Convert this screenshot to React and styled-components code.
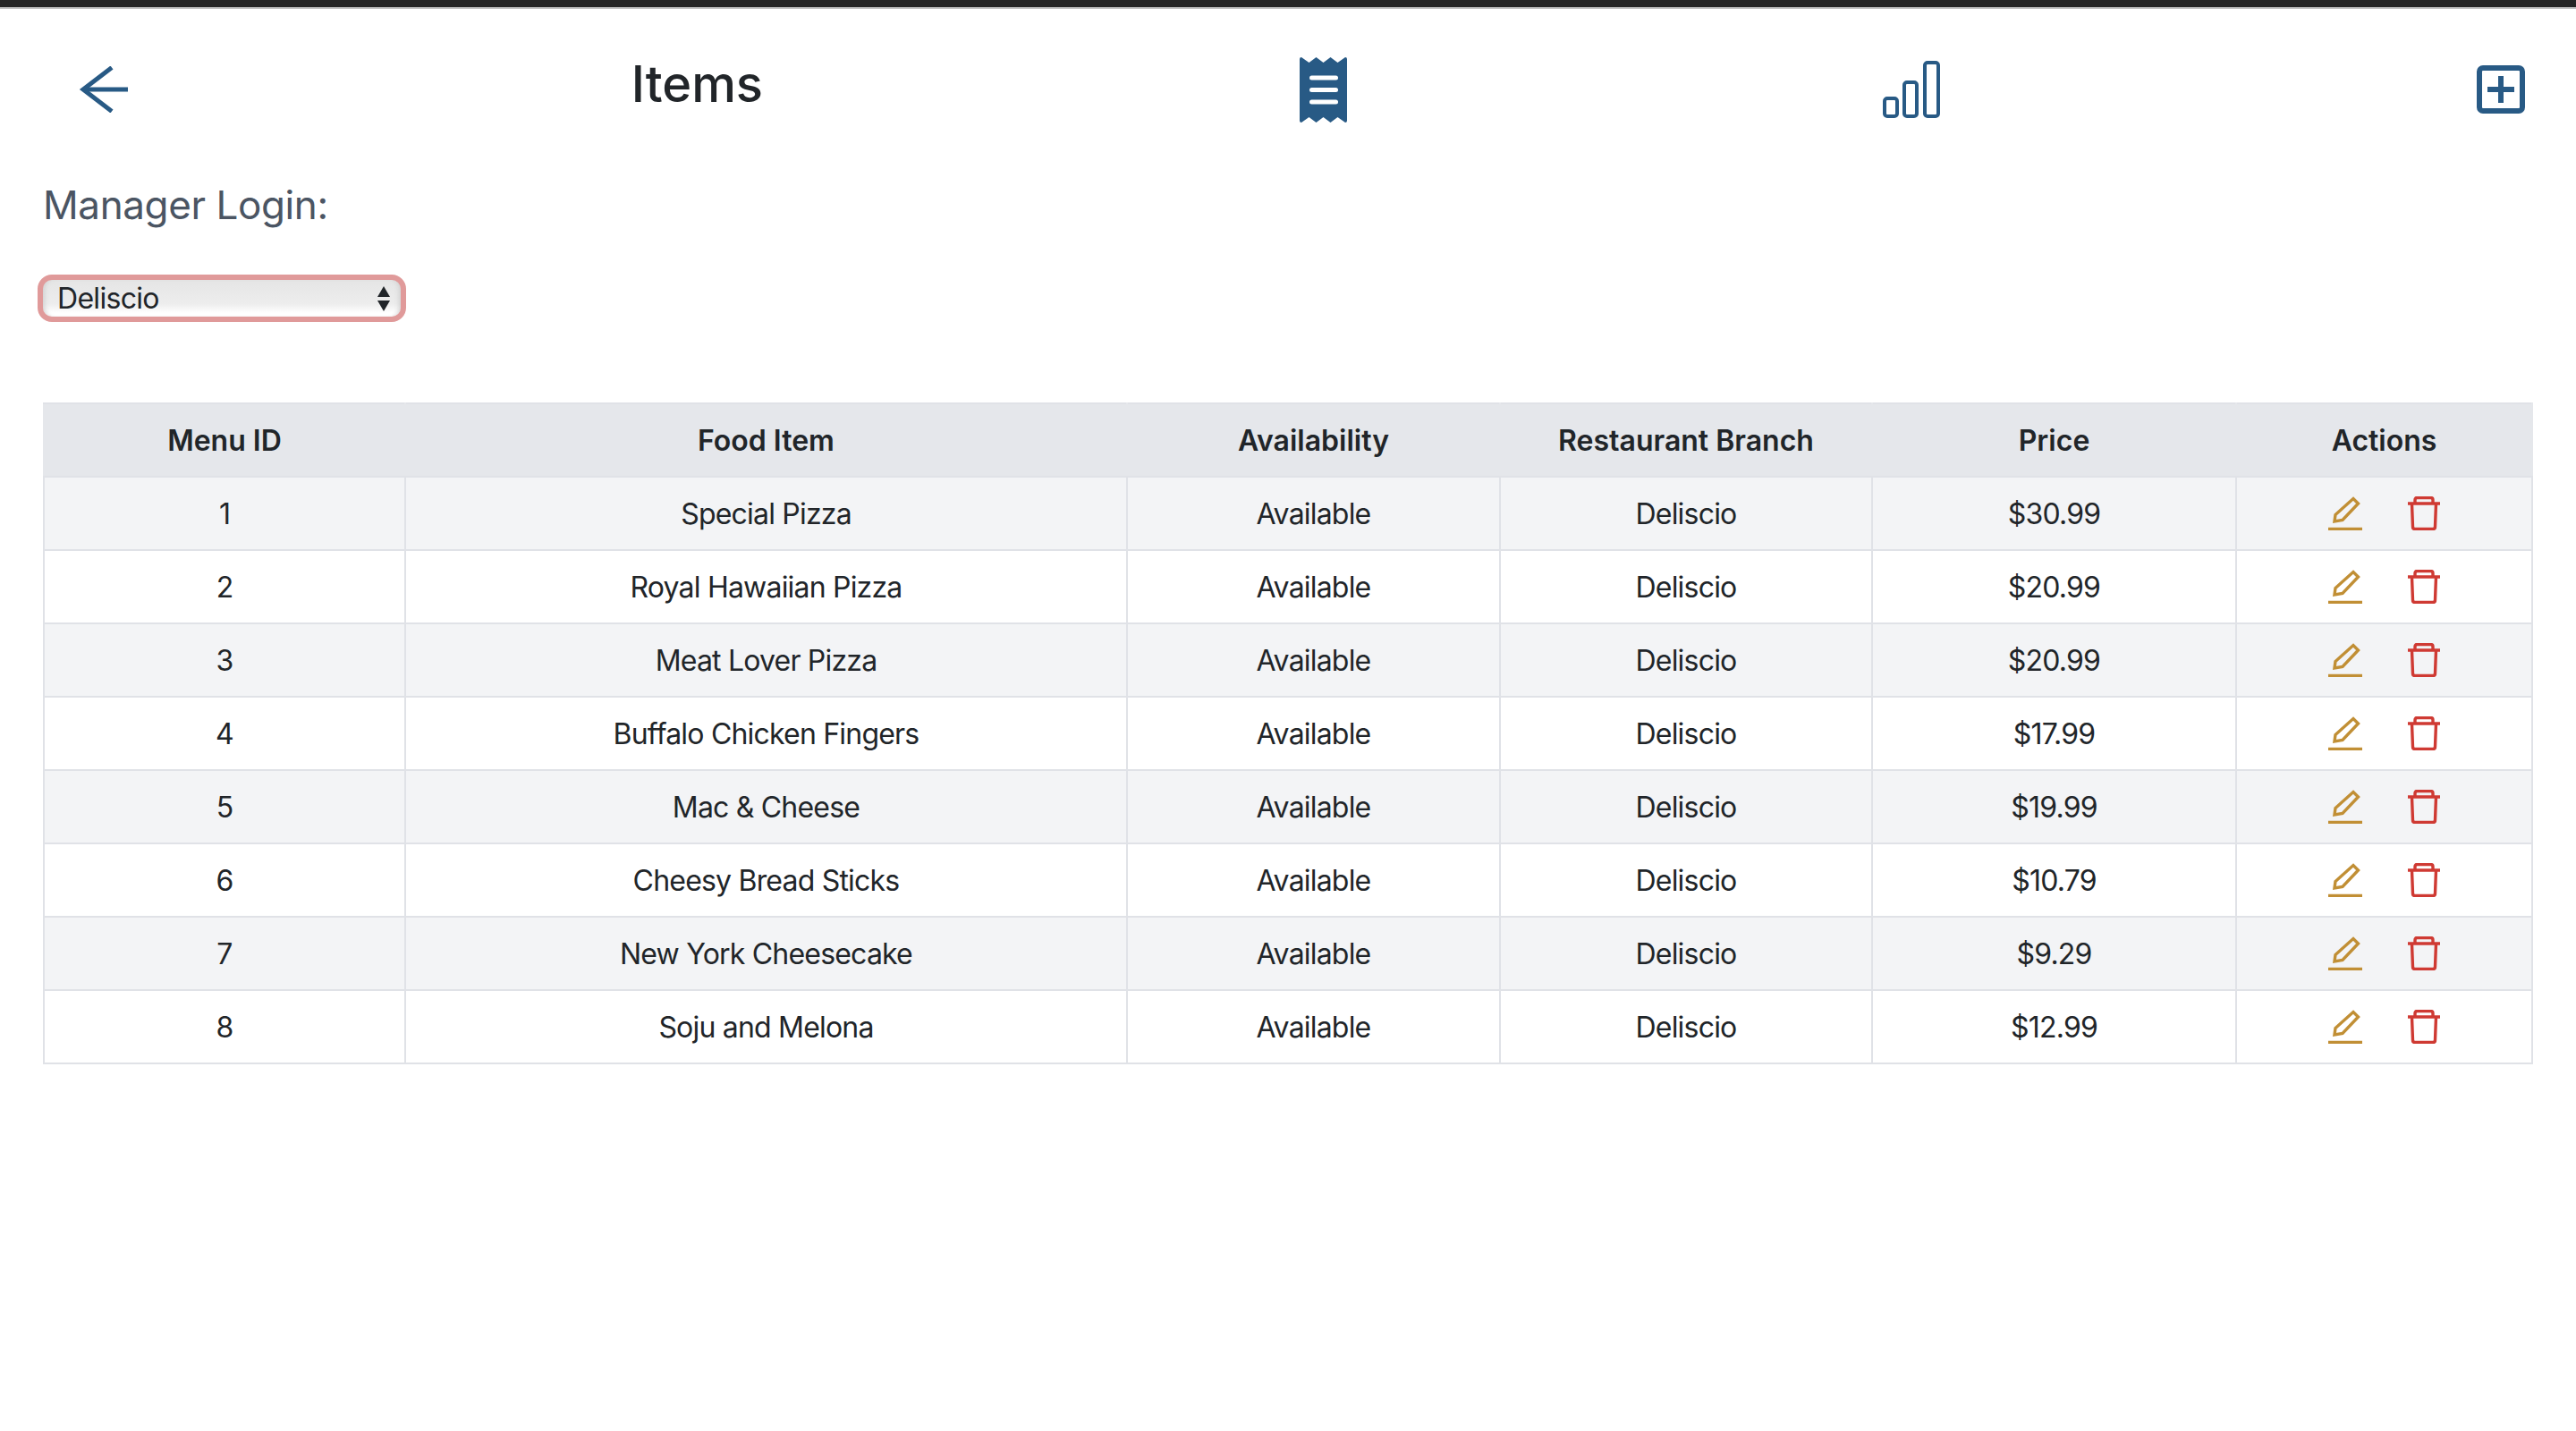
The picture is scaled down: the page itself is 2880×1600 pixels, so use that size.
import styled, { createGlobalStyle } from 'styled-components';

const GlobalStyle = createGlobalStyle`
  * {
    box-sizing: border-box;
  }

  body {
    margin: 0;
    background: #fff;
    color: #212529;
    font-family: Inter, "Noto Sans", sans-serif;
  }
`;

const Page = styled.div`
  min-height: 1600px;
  background: #fff;
`;

const TopBar = styled.div`
  height: 10px;
  background: #252525;
  border-bottom: 2px solid #c4c4c4;
`;

const Header = styled.header`
  display: flex;
  align-items: center;
  justify-content: space-between;
  height: 180px;
  padding: 0 57px 0 88px;
`;

const IconButton = styled.button`
  display: flex;
  padding: 0;
  border: none;
  background: none;
  color: #285a85;
  cursor: pointer;
`;

const Title = styled.h1`
  margin: 0 0 12px -38px;
  font-size: 56px;
  line-height: 68px;
  font-weight: 500;
  color: #212529;
`;

const Content = styled.main`
  padding: 0 48px;
`;

const Label = styled.h2`
  margin: 12px 0 0;
  font-size: 44px;
  line-height: 54px;
  font-weight: 400;
  letter-spacing: -0.4px;
  color: #4b5563;
`;

const SelectWrap = styled.div`
  position: relative;
  width: 412px;
  height: 53px;
  margin: 51px 0 0 -6px;
`;

const Select = styled.select`
  display: block;
  width: 100%;
  height: 100%;
  padding: 0 0 0 16px;
  border: 6px solid #e09a9a;
  border-radius: 16px;
  background: linear-gradient(#e5e5e5, #ededed 65%, #fff 90%);
  box-shadow: inset 6px 0 6px -5px #c9c9c9, inset -6px 0 6px -5px #c9c9c9;
  appearance: none;
  outline: none;
  font-family: inherit;
  font-size: 32px;
  letter-spacing: -0.7px;
  color: #212529;
`;

const SelectArrows = styled.svg`
  position: absolute;
  top: 13px;
  right: 18px;
  pointer-events: none;
`;

const Table = styled.table`
  width: 2782px;
  margin-top: 90px;
  border-collapse: collapse;
  table-layout: fixed;
  font-size: 32px;
  text-align: center;
`;

const HeadCell = styled.th`
  height: 82px;
  padding: 0;
  border: 2px solid #e0e2e7;
  border-left-color: #e5e7eb;
  border-right-color: #e5e7eb;
  background: #e5e7eb;
  font-weight: 600;
`;

const Row = styled.tr`
  background: ${(props) => (props.$striped ? '#f3f4f6' : '#fff')};
`;

const Cell = styled.td`
  height: 82px;
  padding: 0;
  border: 2px solid #e0e2e7;
  font-weight: 400;
  letter-spacing: -0.8px;
`;

const Actions = styled.div`
  display: flex;
  justify-content: center;
  align-items: center;
  gap: 51px;
`;

const ActionButton = styled.button`
  display: flex;
  padding: 0;
  border: none;
  background: none;
  color: ${(props) => props.$color};
  cursor: pointer;
`;

const columns = [
  { title: 'Menu ID', width: 404 },
  { title: 'Food Item', width: 807 },
  { title: 'Availability', width: 417 },
  { title: 'Restaurant Branch', width: 416 },
  { title: 'Price', width: 407 },
  { title: 'Actions', width: 331 },
];

const items = [
  { id: 1, name: 'Special Pizza', price: '$30.99' },
  { id: 2, name: 'Royal Hawaiian Pizza', price: '$20.99' },
  { id: 3, name: 'Meat Lover Pizza', price: '$20.99' },
  { id: 4, name: 'Buffalo Chicken Fingers', price: '$17.99' },
  { id: 5, name: 'Mac & Cheese', price: '$19.99' },
  { id: 6, name: 'Cheesy Bread Sticks', price: '$10.79' },
  { id: 7, name: 'New York Cheesecake', price: '$9.29' },
  { id: 8, name: 'Soju and Melona', price: '$12.99' },
];

const BackIcon = () => (
  <svg width="56" height="52" viewBox="0 0 56 52" fill="none" stroke="currentColor" strokeWidth="5">
    <path d="M55 26H6" />
    <path d="M37 1.5L5 26L37 50.5" />
  </svg>
);

const ReceiptIcon = () => (
  <svg width="53" height="73" viewBox="0 0 53 73" fill="currentColor">
    <path d="M0 2Q0 0 2 0L10.5 6L18.5 0L26.5 6L34.5 0L42.5 6L51 0Q53 0 53 2V71Q53 73 51 73L42.5 67L34.5 73L26.5 67L18.5 73L10.5 67L2 73Q0 73 0 71Z" />
    <g stroke="#fff" strokeWidth="5" strokeLinecap="round">
      <path d="M13.5 23H40.5" />
      <path d="M13.5 36.5H40.5" />
      <path d="M13.5 50H40.5" />
    </g>
  </svg>
);

const ChartIcon = () => (
  <svg width="64" height="64" viewBox="0 0 64 64" fill="none" stroke="currentColor" strokeWidth="4">
    <rect x="2" y="42" width="14" height="20" rx="3" />
    <rect x="24" y="24" width="14" height="38" rx="3" />
    <rect x="47" y="2" width="15" height="60" rx="3" />
  </svg>
);

const AddIcon = () => (
  <svg width="54" height="54" viewBox="0 0 54 54" fill="none" stroke="currentColor" strokeWidth="6">
    <rect x="3" y="3" width="48" height="48" rx="4" />
    <path d="M12 27H42" />
    <path d="M27 12V42" />
  </svg>
);

const EditIcon = () => (
  <svg width="38" height="38" viewBox="0 0 38 38" fill="none" stroke="currentColor" strokeWidth="3.4">
    <path d="M7 28L8 20.5L28 2.5L33.5 8L16 26.5Z" />
    <path d="M0 36.5H38" strokeWidth="3.5" />
  </svg>
);

const TrashIcon = () => (
  <svg width="36" height="38" viewBox="0 0 36 38" fill="none" stroke="currentColor" strokeWidth="3.4">
    <path d="M0 8H36" />
    <path d="M8 8V4Q8 1.5 10.5 1.5H25.5Q28 1.5 28 4V8" />
    <path d="M4.5 8L5.5 34Q5.5 36.5 8 36.5H28Q30.5 36.5 30.5 34L31.5 8" />
  </svg>
);

const App = () => {
  return (
    <Page>
      <GlobalStyle />
      <TopBar />
      <Header>
        <IconButton type="button" aria-label="Back">
          <BackIcon />
        </IconButton>
        <Title>Items</Title>
        <IconButton type="button" aria-label="Items">
          <ReceiptIcon />
        </IconButton>
        <IconButton type="button" aria-label="Reports">
          <ChartIcon />
        </IconButton>
        <IconButton type="button" aria-label="Add item">
          <AddIcon />
        </IconButton>
      </Header>
      <Content>
        <Label>Manager Login:</Label>
        <SelectWrap>
          <Select defaultValue="Deliscio">
            <option>Deliscio</option>
          </Select>
          <SelectArrows width="14" height="28" viewBox="0 0 14 28" fill="#212529">
            <path d="M7 0L14 12H0Z" />
            <path d="M7 28L0 16H14Z" />
          </SelectArrows>
        </SelectWrap>
        <Table>
          <colgroup>
            {columns.map((column) => (
              <col key={column.title} width={column.width} />
            ))}
          </colgroup>
          <thead>
            <tr>
              {columns.map((column) => (
                <HeadCell key={column.title}>{column.title}</HeadCell>
              ))}
            </tr>
          </thead>
          <tbody>
            {items.map((item, index) => (
              <Row key={item.id} $striped={index % 2 === 0}>
                <Cell>{item.id}</Cell>
                <Cell>{item.name}</Cell>
                <Cell>Available</Cell>
                <Cell>Deliscio</Cell>
                <Cell>{item.price}</Cell>
                <Cell>
                  <Actions>
                    <ActionButton type="button" $color="#c18f35" aria-label="Edit">
                      <EditIcon />
                    </ActionButton>
                    <ActionButton type="button" $color="#cf3a33" aria-label="Delete">
                      <TrashIcon />
                    </ActionButton>
                  </Actions>
                </Cell>
              </Row>
            ))}
          </tbody>
        </Table>
      </Content>
    </Page>
  );
};

export default App;
